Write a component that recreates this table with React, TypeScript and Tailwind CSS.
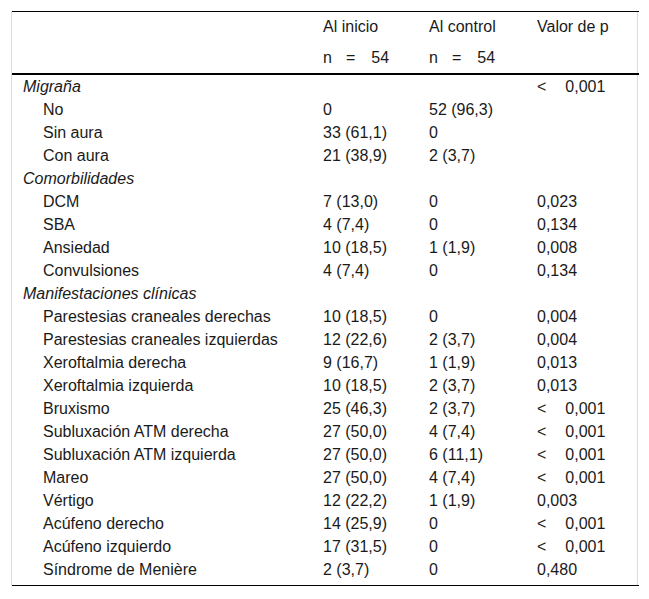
type Row = {
  label: string;
  heading?: boolean;
  inicio?: string;
  control?: string;
  p?: string;
  lt?: boolean;
};

const rows: Row[] = [
  { label: "Migraña", heading: true, p: "0,001", lt: true },
  { label: "No", inicio: "0", control: "52 (96,3)" },
  { label: "Sin aura", inicio: "33 (61,1)", control: "0" },
  { label: "Con aura", inicio: "21 (38,9)", control: "2 (3,7)" },
  { label: "Comorbilidades", heading: true },
  { label: "DCM", inicio: "7 (13,0)", control: "0", p: "0,023" },
  { label: "SBA", inicio: "4 (7,4)", control: "0", p: "0,134" },
  { label: "Ansiedad", inicio: "10 (18,5)", control: "1 (1,9)", p: "0,008" },
  { label: "Convulsiones", inicio: "4 (7,4)", control: "0", p: "0,134" },
  { label: "Manifestaciones clínicas", heading: true },
  { label: "Parestesias craneales derechas", inicio: "10 (18,5)", control: "0", p: "0,004" },
  { label: "Parestesias craneales izquierdas", inicio: "12 (22,6)", control: "2 (3,7)", p: "0,004" },
  { label: "Xeroftalmia derecha", inicio: "9 (16,7)", control: "1 (1,9)", p: "0,013" },
  { label: "Xeroftalmia izquierda", inicio: "10 (18,5)", control: "2 (3,7)", p: "0,013" },
  { label: "Bruxismo", inicio: "25 (46,3)", control: "2 (3,7)", p: "0,001", lt: true },
  { label: "Subluxación ATM derecha", inicio: "27 (50,0)", control: "4 (7,4)", p: "0,001", lt: true },
  { label: "Subluxación ATM izquierda", inicio: "27 (50,0)", control: "6 (11,1)", p: "0,001", lt: true },
  { label: "Mareo", inicio: "27 (50,0)", control: "4 (7,4)", p: "0,001", lt: true },
  { label: "Vértigo", inicio: "12 (22,2)", control: "1 (1,9)", p: "0,003" },
  { label: "Acúfeno derecho", inicio: "14 (25,9)", control: "0", p: "0,001", lt: true },
  { label: "Acúfeno izquierdo", inicio: "17 (31,5)", control: "0", p: "0,001", lt: true },
  { label: "Síndrome de Menière", inicio: "2 (3,7)", control: "0", p: "0,480" },
];

function N() {
  return (
    <span>
      n<span className="ml-[14px]">=</span>
      <span className="ml-[16px]">54</span>
    </span>
  );
}

export default function App() {
  return (
    <div className="bg-white min-h-[599px] pt-[11px] pl-[11px] font-['Liberation_Sans',Arial,sans-serif] text-[16px] text-[#1a1a1a]">
      <div className="w-[627px] border-x border-[#dddddd]">
        <table className="w-full border-collapse table-fixed">
          <colgroup>
            <col className="w-[300px]" />
            <col className="w-[106px]" />
            <col className="w-[108px]" />
            <col className="w-[113px]" />
          </colgroup>
          <thead>
            <tr className="h-[31px] border-t border-black">
              <th />
              <th className="text-left font-normal pl-[11px]">Al inicio</th>
              <th className="text-left font-normal pl-[11px]">Al control</th>
              <th className="text-left font-normal pl-[11px]">Valor de p</th>
            </tr>
            <tr className="h-[31px] border-b-2 border-black">
              <th />
              <th className="text-left font-normal pl-[11px]">
                <N />
              </th>
              <th className="text-left font-normal pl-[11px]">
                <N />
              </th>
              <th />
            </tr>
          </thead>
          <tbody className="border-b border-black">
            {rows.map((r, i) => (
              <tr key={i} className="h-[23px] leading-[23px]">
                <td
                  className={
                    r.heading ? "pl-[11px] italic whitespace-nowrap" : "pl-[31px] whitespace-nowrap"
                  }
                >
                  {r.label}
                </td>
                <td className="pl-[11px] whitespace-nowrap">{r.inicio}</td>
                <td className="pl-[11px] whitespace-nowrap">{r.control}</td>
                <td className="pl-[11px] whitespace-nowrap">
                  {r.lt && <span className="mr-[19px]">&lt;</span>}
                  {r.p}
                </td>
              </tr>
            ))}
            <tr className="h-[5px]">
              <td colSpan={4} />
            </tr>
          </tbody>
        </table>
      </div>
    </div>
  );
}
